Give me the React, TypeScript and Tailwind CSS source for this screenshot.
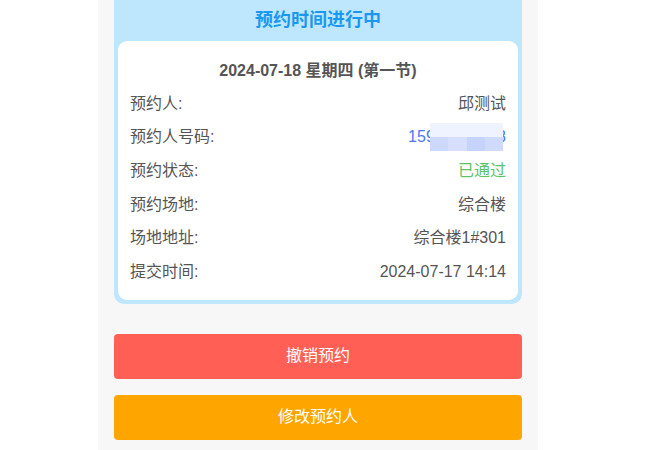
const rows = [
  { label: "预约人:", value: "邱测试", tone: "text-[#555]" },
  { label: "预约人号码:", value: "15912345678", tone: "text-[#4a78f2]", masked: true },
  { label: "预约状态:", value: "已通过", tone: "text-[#5cc466]" },
  { label: "预约场地:", value: "综合楼", tone: "text-[#555]" },
  { label: "场地地址:", value: "综合楼1#301", tone: "text-[#555]" },
  { label: "提交时间:", value: "2024-07-17 14:14", tone: "text-[#555]" },
];

export default function App() {
  return (
    <div
      className="w-[650px] h-[450px] bg-white overflow-hidden"
      style={{ fontFamily: '"Liberation Sans", "Noto Sans CJK SC", sans-serif' }}
    >
      <div className="ml-[98px] w-[440px] h-full bg-[#f7f7f7] px-[16px]">
        {/* Status card */}
        <div className="bg-[#bee6fd] rounded-b-[10px] px-[4px] pb-[4px]">
          <div className="h-[41px] flex items-center justify-center text-[18px] font-bold text-[#1a98f0]">
            预约时间进行中
          </div>
          <div className="bg-white rounded-[9px] px-[12px] pt-[14px] pb-[11px]">
            <div className="h-[32px] flex items-center justify-center text-[16px] font-bold text-[#555]">
              2024-07-18 星期四 (第一节)
            </div>
            {rows.map((r) => (
              <div key={r.label} className="h-[33.6px] flex items-center justify-between text-[16px]">
                <span className="text-[#555]">{r.label}</span>
                {r.masked ? (
                  <span className={`relative ${r.tone}`}>
                    {r.value}
                    <span className="absolute left-[22px] right-[3px] top-[-2px] bottom-[-2px] flex flex-col">
                      <span className="flex-1 bg-[#eef3ff]" />
                      <span className="flex-1 flex">
                        <span className="flex-1 bg-[#ccd8fd]" />
                        <span className="flex-1 bg-[#d6e0fe]" />
                        <span className="flex-1 bg-[#c6d3fc]" />
                        <span className="flex-1 bg-[#cfdafd]" />
                      </span>
                    </span>
                  </span>
                ) : (
                  <span className={r.tone}>{r.value}</span>
                )}
              </div>
            ))}
          </div>
        </div>

        {/* Actions */}
        <button className="mt-[30px] w-full h-[45px] rounded-[4px] bg-[#ff5f55] text-white text-[16px]">
          撤销预约
        </button>
        <button className="mt-[16px] w-full h-[45px] rounded-[4px] bg-[#ffa500] text-white text-[16px]">
          修改预约人
        </button>
      </div>
    </div>
  );
}
